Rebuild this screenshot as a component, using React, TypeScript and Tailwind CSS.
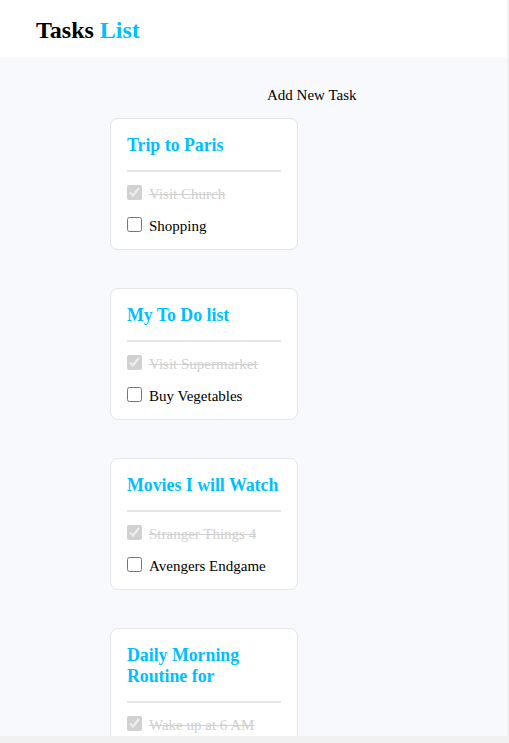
import React from 'react';

type Task = { label: string; done: boolean };
type TaskList = { title: string; tasks: Task[] };

const lists: TaskList[] = [
  { title: 'Trip to Paris', tasks: [{ label: 'Visit Church', done: true }, { label: 'Shopping', done: false }] },
  { title: 'My To Do list', tasks: [{ label: 'Visit Supermarket', done: true }, { label: 'Buy Vegetables', done: false }] },
  { title: 'Movies I will Watch', tasks: [{ label: 'Stranger Things 4', done: true }, { label: 'Avengers Endgame', done: false }] },
  { title: 'Daily Morning Routine for', tasks: [{ label: 'Wake up at 6 AM', done: true }] },
];

function Card({ list }: { list: TaskList }) {
  return (
    <div className="w-[188px] shrink-0 rounded-[8px] border border-[#e6e7ea] bg-white px-4 pt-4 pb-[15px]">
      <h3 className="text-[17.8px] font-bold leading-[21px] text-[#00bfff]">{list.title}</h3>
      <div className="mt-[14px] h-[2px] bg-[#e6e6e6]" />
      <ul className="mt-[10px] flex flex-col gap-[12px]">
        {list.tasks.map((t) => (
          <li key={t.label} className="flex h-[20px] items-center gap-[7px]">
            <input
              type="checkbox"
              checked={t.done}
              disabled={t.done}
              readOnly
              className="h-[15px] w-[15px] shrink-0"
            />
            <span
              className={
                t.done
                  ? 'mt-[5px] text-[15px] leading-[17px] text-[#cfcfcf] line-through'
                  : 'mt-[5px] text-[15px] leading-[17px] text-black'
              }
            >
              {t.label}
            </span>
          </li>
        ))}
      </ul>
    </div>
  );
}

export default function App() {
  return (
    <div className="h-[743px] w-[509px] overflow-hidden bg-[#f1f1f1]" style={{ fontFamily: '"Liberation Serif", "Times New Roman", serif' }}>
      <div className="h-[736px] w-[507px] overflow-hidden bg-[#f8f9fd]">
        <header className="flex h-[57px] items-center bg-white pl-[36px] pt-[2px]">
          <h1 className="text-[24px] font-bold leading-none text-black">
            Tasks <span className="text-[#00bfff]">List</span>
          </h1>
        </header>
        <main className="pt-[30px]">
          <div className="pl-[267px] text-[15px] leading-[17px] text-black">Add New Task</div>
          <div className="mt-[14px] flex flex-col gap-[38px] pl-[110px]">
            {lists.map((l) => (
              <Card key={l.title} list={l} />
            ))}
          </div>
        </main>
      </div>
    </div>
  );
}
